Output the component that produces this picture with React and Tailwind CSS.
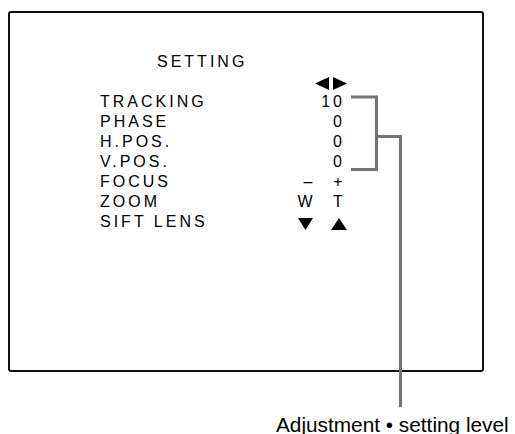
import React from "react";

const Down = () => (
  <svg width="15" height="12" viewBox="0 0 15 12" className="block">
    <polygon points="0,0 15,0 7.5,12" fill="#000" />
  </svg>
);
const Up = () => (
  <svg width="16" height="12" viewBox="0 0 16 12" className="block">
    <polygon points="8,0 16,12 0,12" fill="#000" />
  </svg>
);
const Left = () => (
  <svg width="14" height="13" viewBox="0 0 14 13" className="block">
    <polygon points="14,0 14,13 0,6.5" fill="#000" />
  </svg>
);
const Right = () => (
  <svg width="14" height="13" viewBox="0 0 14 13" className="block">
    <polygon points="0,0 14,6.5 0,13" fill="#000" />
  </svg>
);

const rows = [
  { label: "TRACKING", value: "10" },
  { label: "PHASE", value: "0" },
  { label: "H.POS.", value: "0" },
  { label: "V.POS.", value: "0" },
  { label: "FOCUS", a: <span className="pl-[6px]">–</span>, b: "+" },
  { label: "ZOOM", a: "W", b: "T" },
  { label: "SIFT LENS", a: <div className="flex justify-center pt-[6px]"><Down /></div>, b: <div className="flex justify-center pt-[6px] pl-[2px]"><Up /></div> },
];

export default function App() {
  return (
    <div
      className="relative w-[515px] h-[434px] bg-white overflow-hidden text-black"
      style={{ fontFamily: '"Liberation Sans", Arial, sans-serif' }}
    >
      <div className="ml-[8px] mt-[11px] w-[476px] h-[361px] border-2 border-[#111] rounded-[3px]">
        <div className="pt-[39px] pl-[147px] text-[16px] leading-[20px] tracking-[3px]">SETTING</div>
        <div className="flex h-[20px] pt-[5px] pl-[305px] gap-[4px]">
          <Left />
          <Right />
        </div>
        <div className="pl-[90px] grid grid-cols-[190px_24px_36px] gap-x-[3px] text-[16px] leading-[20px]">
          {rows.map((r) => (
            <React.Fragment key={r.label}>
              <div className="tracking-[3px] whitespace-nowrap">{r.label}</div>
              <div className="text-center">{r.a ?? ""}</div>
              {r.value !== undefined ? (
                <div className="text-right pr-[11px] tracking-[3px]">{r.value}</div>
              ) : (
                <div className="text-center">{r.b}</div>
              )}
            </React.Fragment>
          ))}
        </div>
      </div>
      <div className="mt-[41px] ml-[276px] text-[20.8px] leading-[24px] whitespace-nowrap">
        Adjustment • setting level
      </div>
      <svg
        className="absolute left-0 top-0 pointer-events-none"
        width="515"
        height="434"
        viewBox="0 0 515 434"
      >
        <path
          d="M351 97 H376.5 V169.5 H351 M376.5 136.5 H400.5 V407"
          fill="none"
          stroke="#737373"
          strokeWidth="3"
        />
      </svg>
    </div>
  );
}
